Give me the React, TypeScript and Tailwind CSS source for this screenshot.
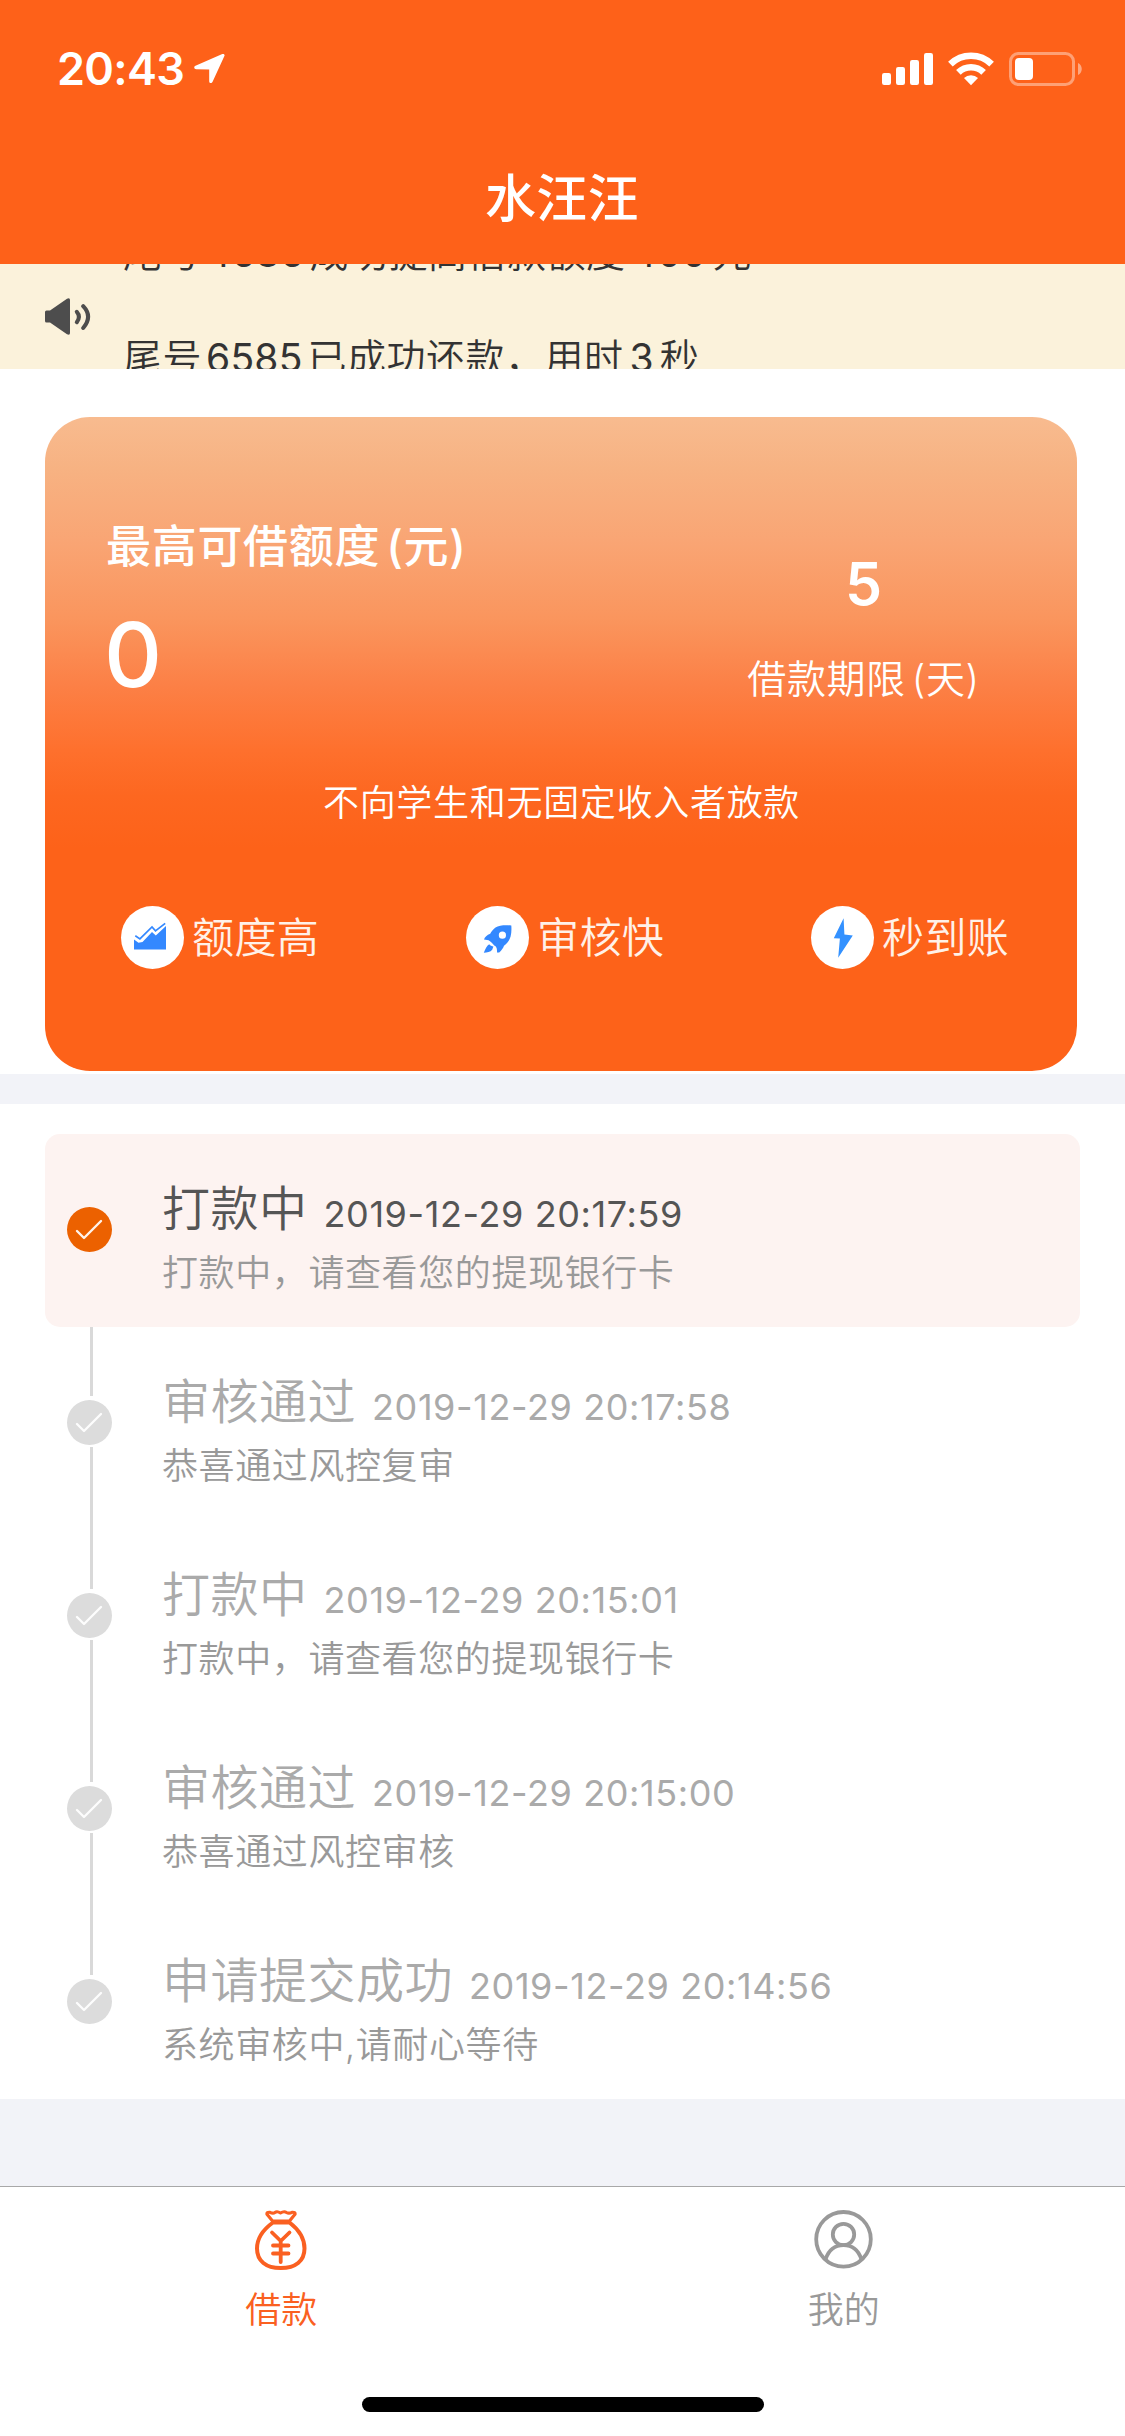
import React from 'react';

interface Step {
  title: string;
  time: string;
  desc: string;
}

const NOTICES = [
  { tail: '4686', action: '成功提高借款额度', value: '400', unit: '元' },
  { tail: '6585', action: '已成功还款，用时', value: '3', unit: '秒' },
];

const STEPS: Step[] = [
  { title: '打款中', time: '2019-12-29 20:17:59', desc: '打款中，请查看您的提现银行卡' },
  { title: '审核通过', time: '2019-12-29 20:17:58', desc: '恭喜通过风控复审' },
  { title: '打款中', time: '2019-12-29 20:15:01', desc: '打款中，请查看您的提现银行卡' },
  { title: '审核通过', time: '2019-12-29 20:15:00', desc: '恭喜通过风控审核' },
  { title: '申请提交成功', time: '2019-12-29 20:14:56', desc: '系统审核中,请耐心等待' },
];

const ChartIcon: React.FC = () => (
  <svg viewBox="0 0 63 63" className="size-[63px]">
    <path d="M13 43.5V33.5L17.5 36.7L21.5 36L31 26L34.8 29.6L45 20V43.5Z" fill="#3388ff" />
    <path d="M14.3 29.8L18.9 32.9L31 20.9L34.5 24.9L44.2 17.3" fill="none" stroke="#3388ff" strokeWidth="1.7" />
  </svg>
);

const RocketIcon: React.FC = () => (
  <svg viewBox="0 0 63 63" className="size-[63px]" fill="#3388ff">
    <path
      fillRule="evenodd"
      d="M45.3 19.5C39 19 33 19.3 29.5 21.5C27 23.3 25.5 25.5 24.2 27.7C21 29 18.7 31 18 33.6L22.6 34.2C24.3 35.3 26.8 37.6 28.2 39.6C30 40.2 31.3 42 31 46.6L33.2 46.4C35.5 44.5 37 42.5 38 39.8C41 37.5 43.5 34.5 44.6 30.5C45.5 27 45.6 23 45.3 19.5ZM36.4 25.6A3.6 3.6 0 1 1 36.4 32.8A3.6 3.6 0 1 1 36.4 25.6Z"
    />
    <path d="M23.2 38.2C21 39.3 19.3 42.6 17.8 46.8C21 46.6 24.5 46.3 26.2 43.8L27.4 40.5C26 40.2 24.3 39.6 23.2 38.2Z" />
  </svg>
);

const BoltIcon: React.FC = () => (
  <svg viewBox="0 0 63 63" className="size-[63px]">
    <path d="M32.6 12.2L22.8 32.2L28.9 32.6L27.2 51.8L41.8 29.4L33.4 28.4Z" fill="#3391ff" />
  </svg>
);

const FEATURES = [
  { label: '额度高', icon: <ChartIcon /> },
  { label: '审核快', icon: <RocketIcon /> },
  { label: '秒到账', icon: <BoltIcon /> },
];

const StatusBar: React.FC = () => (
  <div className="flex h-[132px] items-start justify-between pl-[57px] pr-[42px] pt-[52px]">
    <div className="flex items-start">
      <span className="w-[137px] whitespace-nowrap text-[45px] font-semibold leading-[34px] tracking-[-0.7px]">20:43</span>
      <svg viewBox="0 0 31 31" className="mt-[1px] size-[31px]" fill="#fff">
        <path d="M28.3 1.1C29.9.4 31 1.5 30.4 3.1L18.6 28.8C17.7 30.8 15.2 30.3 15.2 28.2V16.4L2.2 16.2C0 16.1-.5 13.7 1.5 12.8Z" />
      </svg>
    </div>
    <div className="flex h-[34px] items-start">
      <svg viewBox="0 0 52 34" className="h-[34px] w-[52px]" fill="#fff">
        <rect x="0" y="21" width="9" height="12" rx="2.2" />
        <rect x="14" y="15" width="9" height="18" rx="2.2" />
        <rect x="28" y="8" width="9" height="25" rx="2.2" />
        <rect x="42" y="1" width="9" height="32" rx="2.2" />
      </svg>
      <svg viewBox="0 0 46 34" className="ml-[14px] h-[34px] w-[46px]">
        <g fill="none" stroke="#fff" strokeWidth="6.6">
          <path d="M2.4 12.2A29.5 29.5 0 0 1 43.6 12.2" />
          <path d="M10.4 20.4A18 18 0 0 1 35.6 20.4" />
        </g>
        <path d="M16 26.1A10 10 0 0 1 30 26.1L23 33.2Z" fill="#fff" />
      </svg>
      <svg viewBox="0 0 74 34" className="ml-[15px] h-[34px] w-[74px]">
        <rect x="1.5" y="1.5" width="63" height="31" rx="8" fill="none" stroke="#fff" strokeOpacity=".4" strokeWidth="3" />
        <rect x="6" y="6" width="18" height="22" rx="4" fill="#fff" />
        <path d="M69 11C74 13 74 21 69 23Z" fill="#fff" fillOpacity=".45" />
      </svg>
    </div>
  </div>
);

const Notice: React.FC = () => (
  <div className="flex h-[105px] items-center overflow-hidden bg-[#fbf2db]">
    <svg viewBox="0 0 46 37" className="ml-[45px] h-[37px] w-[46px] shrink-0">
      <path d="M0 14Q0 12.5 1.5 12.5H5L22 .8Q25 -.5 25 2V35Q25 37.5 22 36.2L5 24.5H1.5Q0 24.5 0 23Z" fill="#4d4d4d" />
      <g fill="none" stroke="#4d4d4d" strokeWidth="4" strokeLinecap="round">
        <path d="M31.8 13.8Q36 18.5 31.8 24.2" />
        <path d="M38.2 8.2Q48 18.5 38.2 30" />
      </g>
    </svg>
    {/* Ticker list, caught halfway through its upward scroll */}
    <ul className="-mt-[128px] ml-[32px] h-[105px] text-[39px] font-[350] leading-[105px] tracking-[0.5px] text-[#333]">
      {NOTICES.map((item) => (
        <li key={item.tail} className="flex h-[105px] whitespace-nowrap">
          <span>尾号</span>
          <span className="ml-[4px] mr-[5px] font-normal tracking-[0.2px]">{item.tail}</span>
          <span>{item.action}</span>
          <span className="mx-[6px] font-normal tracking-[0.2px]">{item.value}</span>
          <span>{item.unit}</span>
        </li>
      ))}
    </ul>
  </div>
);

const QuotaCard: React.FC = () => (
  <section className="h-[705px] bg-white pl-[45px] pt-[48px]">
    <div className="flex h-[654px] w-[1032px] flex-col rounded-[45px] bg-[linear-gradient(180deg,#f8bb8f_0%,#f7b282_8%,#f9a574_19%,#fa955d_31%,#fc8046_41%,#fe702d_51%,#fd6720_58%,#fd6219_66%)] text-white">
      <div className="flex h-[336px] justify-between pl-[61px]">
        <div className="pt-[100px]">
          <div className="flex text-[45px] font-medium leading-[60px] tracking-[0.7px]">
            <span>最高可借额度</span>
            <span className="ml-[6px]">(元)</span>
          </div>
          <div className="-ml-[2px] mt-[32px] text-[90px] font-medium leading-[92px]">0</div>
        </div>
        <div className="w-[427px] pt-[137px] text-center">
          <div className="text-[59px] font-semibold leading-[60px]">5</div>
          <div className="mt-[37px] flex justify-center text-[39px] font-[350] leading-[56px] tracking-[0.6px]">
            <span>借款期限</span>
            <span className="ml-[6px]">(天)</span>
          </div>
        </div>
      </div>
      <p className="mt-[24px] pl-[1px] text-center text-[36px] font-[350] leading-[52px] tracking-[0.7px]">不向学生和无固定收入者放款</p>
      <div className="mt-[77px] flex pl-[76px]">
        {FEATURES.map((feature) => (
          <div key={feature.label} className="flex w-[345px] shrink-0 items-center">
            <div className="size-[63px] rounded-full bg-white">{feature.icon}</div>
            <span className="ml-[8px] text-[42px] font-[350] leading-[63px] tracking-[0.4px] text-[#fff1e8]">{feature.label}</span>
          </div>
        ))}
      </div>
    </div>
  </section>
);

const StepRow: React.FC<{ step: Step; active: boolean; last: boolean }> = ({ step, active, last }) => (
  <li className={active ? 'flex h-[193px] rounded-[15px] bg-[#fdf3f1]' : 'flex h-[193px]'}>
    {/* Marker with its connector pieces above and below */}
    <div className="ml-[22px] flex w-[45px] flex-col items-center">
      <div className={active ? 'h-[73px]' : 'ml-[3px] h-[69px] w-[3px] bg-[#d9d9d9]'}></div>
      <svg viewBox="0 0 45 45" className={active ? 'size-[45px] shrink-0' : 'mt-[4px] size-[45px] shrink-0'}>
        <circle cx="22.5" cy="22.5" r="22.5" fill={active ? '#ec6100' : '#dcdcdc'} />
        <path d="M10 24L17 31L34 14" fill="none" stroke="#fff" strokeOpacity=".92" strokeWidth="2.4" strokeLinecap="round" strokeLinejoin="round" />
      </svg>
      {!active && !last && <div className="ml-[3px] mt-[2px] w-[3px] flex-1 bg-[#d9d9d9]"></div>}
    </div>
    <div className="ml-[50px] pt-[40px]">
      <div className={active ? 'flex h-[70px] text-[#555]' : 'flex h-[70px] text-[#aaa]'}>
        <h3 className="text-[48px] font-[350] leading-[70px] tracking-[0.5px]">{step.title}</h3>
        <span className="ml-[16px] text-[36px] leading-[80px] tracking-[0.6px]">{step.time}</span>
      </div>
      <p className="mt-[3px] text-[36px] font-[350] leading-[52px] tracking-[0.6px] text-[#999]">{step.desc}</p>
    </div>
  </li>
);

const TabBar: React.FC = () => (
  <nav className="h-[250px] border-t border-[#a8a8a8] bg-white">
    <div className="flex h-[210px] text-[36px] font-[350] leading-[52px]">
      <a className="flex w-1/2 flex-col items-center pt-[23px] text-[#fa6021]">
        <svg viewBox="0 0 52 60" className="h-[60px] w-[52px]" fill="none" stroke="#fa6021" strokeLinecap="round" strokeLinejoin="round">
          <path d="M17.5 11L12 4.3Q11.5 2 15 2.3Q18 4 20 2.5Q22 .8 25.5 3Q29 .8 31.5 2.5Q34 4 37 2.3Q40.5 2 40 4.3L34.5 11Z" strokeWidth="3.2" />
          <path d="M18 12.5C9 19 2 28 2 38.5C2 51 11 58 25.7 58C40.5 58 49.5 51 49.5 38.5C49.5 28 43 19 34.5 12.5Z" strokeWidth="4" />
          <path d="M17 22.5L25.7 31L34.5 22.5M25.7 31V52M18 35.5H33.5M18 43.5H33.5" strokeWidth="3.8" />
        </svg>
        <span className="mt-[14px]">借款</span>
      </a>
      <a className="flex w-1/2 flex-col items-center pt-[23px] text-[#999]">
        <svg viewBox="0 0 60 60" className="size-[60px]" fill="none" stroke="#999" strokeWidth="3.8">
          <circle cx="29.5" cy="29.3" r="27.3" />
          <circle cx="29.5" cy="24.5" r="10.7" />
          <path d="M11.5 49.5C15 39 22 35.2 29.5 35.2C37 35.2 44 39 47.5 49.5" />
        </svg>
        <span className="mt-[14px]">我的</span>
      </a>
    </div>
    <div className="mx-auto h-[15px] w-[402px] rounded-full bg-black"></div>
  </nav>
);

export default function App() {
  return (
    <div className="flex h-[2436px] w-[1125px] flex-col overflow-hidden bg-[#f2f3f8] font-[Inter,'Noto_Sans_CJK_SC',sans-serif]">
      <header className="h-[264px] shrink-0 bg-[#fe6119] text-white">
        <StatusBar />
        <h1 className="flex h-[132px] items-center justify-center pr-[1px] pt-[2px] text-[51px] font-medium tracking-[0.3px]">水汪汪</h1>
      </header>
      <Notice />
      <QuotaCard />
      <ul className="mt-[30px] h-[995px] bg-white px-[45px] pt-[30px]">
        {STEPS.map((step, index) => (
          <StepRow key={step.time} step={step} active={index === 0} last={index === STEPS.length - 1} />
        ))}
      </ul>
      <div className="flex-1"></div>
      <TabBar />
    </div>
  );
}
